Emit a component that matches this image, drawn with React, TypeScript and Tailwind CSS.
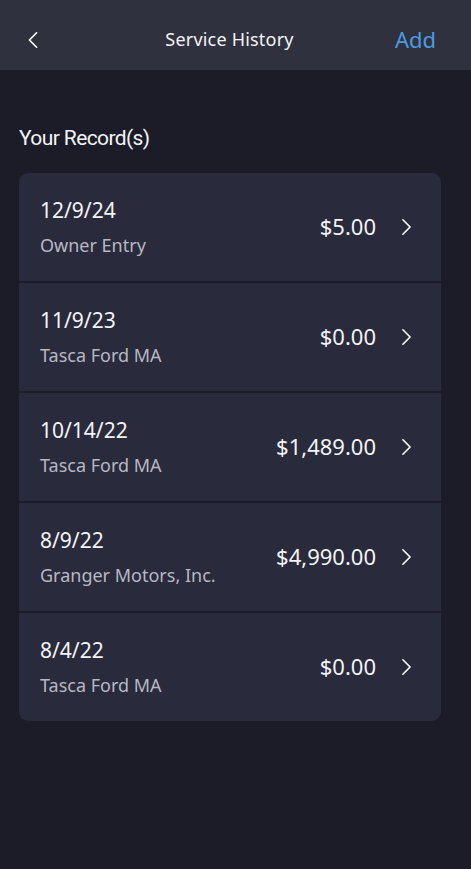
import React from "react";

const records = [
  { date: "12/9/24", source: "Owner Entry", price: "$5.00" },
  { date: "11/9/23", source: "Tasca Ford MA", price: "$0.00" },
  { date: "10/14/22", source: "Tasca Ford MA", price: "$1,489.00" },
  { date: "8/9/22", source: "Granger Motors, Inc.", price: "$4,990.00" },
  { date: "8/4/22", source: "Tasca Ford MA", price: "$0.00" },
];

function Chevron({ dir = "right", className = "" }: { dir?: "left" | "right"; className?: string }) {
  return (
    <svg viewBox="0 0 12 20" className={className} fill="none" stroke="currentColor" strokeWidth="1.8" strokeLinecap="round" strokeLinejoin="round">
      {dir === "right" ? <path d="M2 2l8 8-8 8" /> : <path d="M10 2L2 10l8 8" />}
    </svg>
  );
}

export default function App() {
  return (
    <div className="min-h-[869px] w-[471px] bg-[#1b1c28] text-[#f4f4f6]" style={{ fontFamily: '"Noto Sans", "Open Sans", sans-serif' }}>
      {/* top bar */}
      <div className="flex h-[70px] items-center bg-[#30313e] px-[27px] pt-[9px]">
        <div className="w-[70px]">
          <Chevron dir="left" className="h-[18px] w-[12px] text-white" />
        </div>
        <div className="flex-1 pr-[12px] text-center text-[18px] tracking-[0.2px]">Service History</div>
        <div className="-mt-[2px] w-[70px] pr-[8px] text-right text-[22px] leading-[28px] text-[#4a9be0]">Add</div>
      </div>

      <div className="pl-[19px] pr-[30px] pt-[53px]">
        <h2 className="text-[21px] tracking-[-0.6px]" style={{ fontFamily: '"Liberation Sans Narrow", "Roboto", sans-serif' }}>
          Your Record(s)
        </h2>

        <div className="mt-[18px] flex flex-col gap-[2px] overflow-hidden rounded-[9px]">
          {records.map((r) => (
            <div key={r.date} className="flex h-[108px] items-center bg-[#292a3b] pl-[21px] pr-[29px]">
              <div className="-mt-[1px] flex flex-1 flex-col">
                <div className="text-[21px] leading-[26px]">{r.date}</div>
                <div className="mt-[11px] text-[18px] leading-[22px] text-[#b7b8c4]">{r.source}</div>
              </div>
              <div className="-mt-[1px] text-[22px]">{r.price}</div>
              <Chevron className="ml-[25px] h-[18px] w-[11px] text-white" />
            </div>
          ))}
        </div>
      </div>
    </div>
  );
}
